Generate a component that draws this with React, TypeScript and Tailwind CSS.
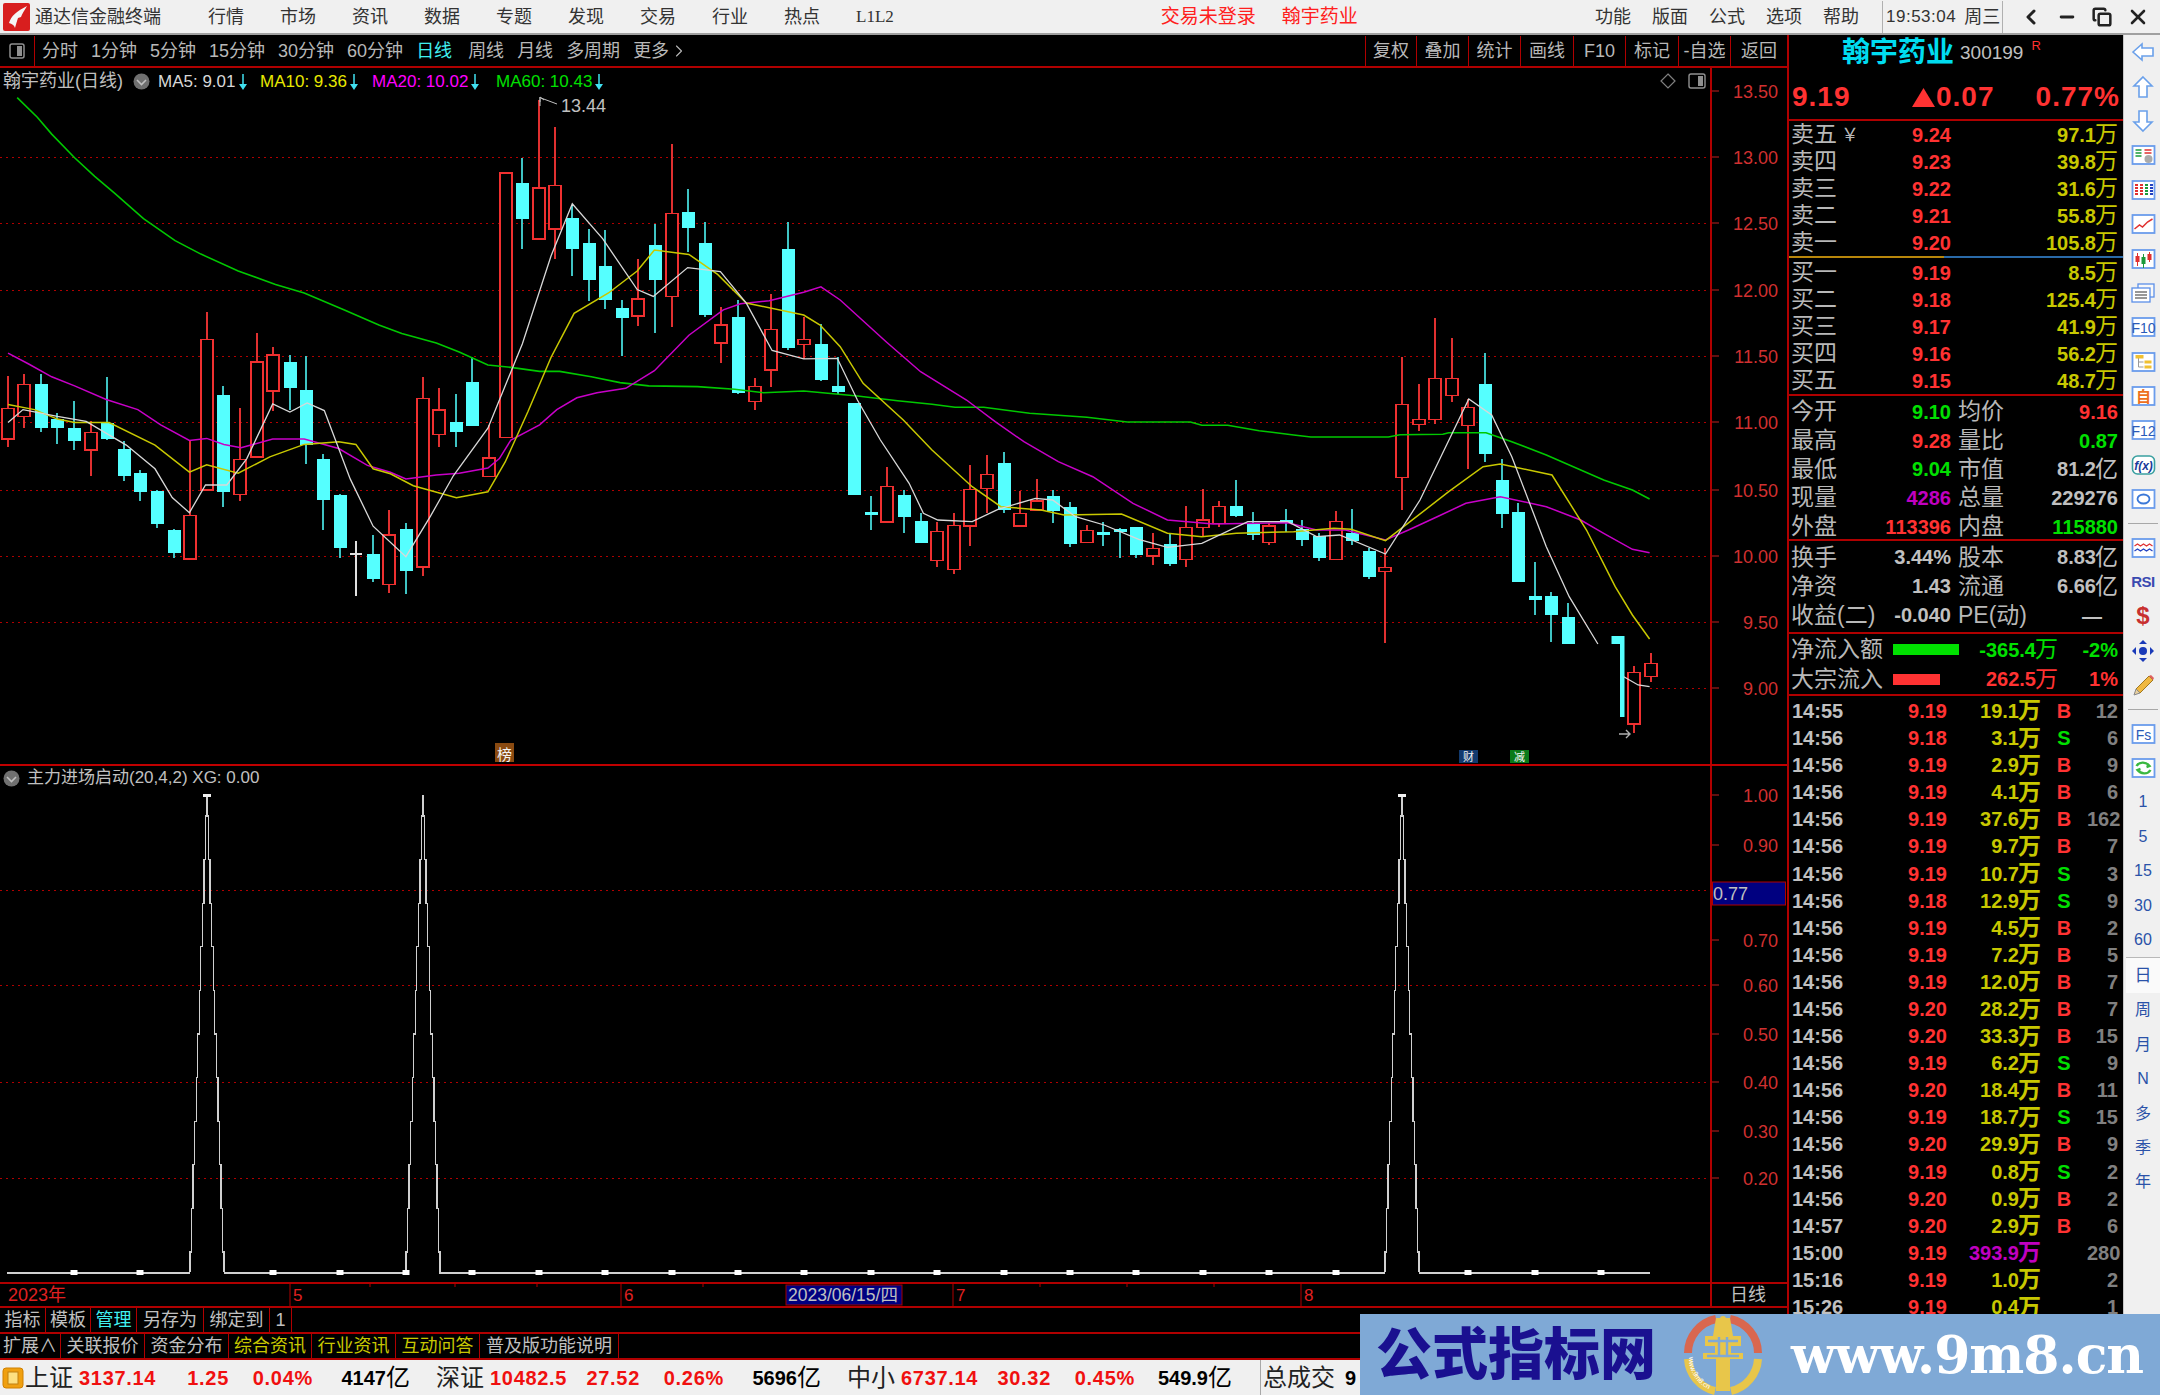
import { ChevronLeft, ChevronRight, Copy, Minus, X as Close } from "lucide-react";
import type { ReactNode } from "react";

const RED = "#ff3232";
const YEL = "#c8c800";
const GRN = "#00e000";
const PUR = "#c000c0";
const GRY = "#c0c0c0";

// candle x from its index
const cx = (i: number) => Math.round(7.5 + 16.6 * i);
const y7 = (v: number) => 80 + v / 2.958;
const y8 = (v: number) => 300 + v / 3;

type Candle = [string, number, number, number, number];

// wick top, body top, body bottom, wick bottom
const candlesA: Candle[] = [
  ["r", 875, 972, 1062, 1085], ["r", 870, 900, 995, 1028], ["c", 870, 900, 1028, 1040], ["c", 985, 1003, 1028, 1077],
  ["c", 950, 1030, 1068, 1095], ["r", 1010, 1043, 1094, 1170], ["c", 878, 1015, 1063, 1065], ["c", 1068, 1091, 1170, 1187],
  ["c", 1153, 1162, 1219, 1246], ["c", 1212, 1215, 1312, 1325], ["c", 1327, 1330, 1400, 1415], ["r", 1065, 1288, 1417, 1417],
  ["r", 687, 768, 1213, 1215], ["c", 905, 932, 1219, 1263], ["r", 970, 1122, 1226, 1246], ["r", 748, 834, 1115, 1115],
  ["r", 790, 813, 920, 980], ["c", 812, 834, 912, 975], ["c", 816, 918, 1080, 1135], ["c", 1105, 1122, 1241, 1330],
  ["c", 1225, 1229, 1383, 1415], ["w", 1365, 1403, 1405, 1525], ["c", 1345, 1402, 1477, 1485], ["r", 1272, 1346, 1493, 1517],
  ["c", 1310, 1327, 1453, 1520], ["r", 878, 942, 1440, 1467], ["r", 912, 976, 1048, 1085], ["c", 930, 1011, 1041, 1085],
  ["c", 818, 892, 1024, 1024], ["r", 1020, 1118, 1173, 1175], ["r", 275, 275, 1057, 1060], ["c", 230, 306, 410, 500],
  ["r", 60, 320, 471, 471], ["r", 140, 312, 441, 530], ["c", 370, 407, 499, 580], ["c", 440, 483, 593, 655],
  ["c", 443, 549, 651, 677], ["c", 650, 675, 704, 815], ["r", 530, 648, 698, 727], ["c", 425, 488, 593, 748],
  ["r", 190, 395, 640, 730], ["c", 322, 390, 437, 510], ["c", 420, 483, 695, 700], ["r", 672, 724, 778, 837],
  ["c", 650, 700, 925, 930], ["r", 882, 906, 951, 975], ["r", 633, 738, 858, 908], ["c", 420, 501, 793, 800],
  ["r", 700, 767, 783, 825], ["c", 722, 781, 887, 890], ["c", 820, 904, 922, 930], ["c", 954, 954, 1228, 1228],
  ["c", 1230, 1278, 1284, 1330], ["r", 1145, 1203, 1307, 1307],
];

const candlesB: Candle[] = [
  ["c", 570, 586, 652, 700], ["c", 640, 662, 729, 730], ["r", 665, 695, 782, 800], ["r", 640, 677, 808, 822],
  ["r", 495, 568, 678, 737], ["r", 465, 523, 565, 640], ["c", 455, 488, 630, 640], ["r", 572, 640, 678, 680],
  ["r", 537, 603, 630, 630], ["c", 570, 587, 632, 670], ["c", 605, 622, 733, 742], ["r", 675, 691, 728, 730],
  ["c", 665, 695, 702, 738], ["c", 685, 686, 688, 775], ["c", 680, 681, 765, 773], ["r", 698, 745, 768, 795],
  ["c", 700, 732, 793, 798], ["r", 618, 682, 778, 800], ["r", 568, 660, 682, 710], ["r", 604, 620, 670, 680],
  ["c", 540, 618, 647, 650], ["c", 635, 672, 706, 720], ["r", 668, 678, 727, 735], ["c", 627, 660, 670, 695],
  ["c", 660, 686, 720, 738], ["c", 700, 708, 773, 782], ["r", 632, 665, 778, 778], ["c", 627, 700, 723, 735],
  ["c", 745, 752, 832, 837], ["r", 745, 802, 814, 1030], ["r", 172, 313, 533, 630], ["r", 253, 358, 373, 392],
  ["r", 55, 236, 358, 372], ["r", 113, 236, 287, 305], ["r", 298, 322, 377, 508], ["c", 158, 253, 463, 487],
  ["c", 478, 541, 643, 685], ["c", 608, 636, 846, 846], ["c", 785, 888, 900, 945], ["c", 875, 888, 945, 1027],
  ["c", 910, 950, 1032, 1032],
];

type Pts = number[][];
const join = (a: Pts, b: Pts) =>
  [...a.map(([x, y]) => `${(x / 1.742).toFixed(1)},${y7(y).toFixed(1)}`), ...b.map(([x, y]) => `${(800 + x / 1.742).toFixed(1)},${y8(y).toFixed(1)}`)].join(" ");

const ma60 = join(
  [[30, 52], [65, 110], [90, 160], [130, 230], [165, 285], [200, 335], [250, 410], [305, 475], [350, 515], [415, 565], [480, 605], [530, 630], [600, 680], [660, 725], [700, 750], [760, 778], [800, 805], [850, 843], [890, 850], [940, 862], [975, 862], [1030, 878], [1080, 895], [1130, 905], [1215, 907], [1280, 915], [1330, 925], [1400, 920]],
  [[30, 277], [100, 288], [170, 302], [230, 313], [270, 322], [320, 322], [400, 340], [500, 352], [570, 366], [680, 366], [700, 376], [745, 376], [800, 392], [860, 405], [890, 411], [1025, 411], [1045, 404], [1120, 403], [1130, 398], [1195, 398], [1240, 425], [1300, 465], [1400, 540], [1450, 570], [1480, 597]],
);
const ma20 = join(
  [[14, 808], [50, 840], [90, 878], [130, 905], [185, 945], [240, 975], [280, 1020], [330, 1066], [360, 1060], [390, 1078], [420, 1088], [475, 1062], [530, 1062], [590, 1090], [640, 1140], [680, 1160], [707, 1180], [760, 1168], [800, 1163], [850, 1148], [870, 1120], [890, 1065], [940, 1020], [970, 975], [1005, 940], [1040, 925], [1090, 912], [1140, 860], [1200, 755], [1260, 680], [1290, 662], [1340, 653], [1400, 628], [1430, 612]],
  [[70, 0], [150, 125], [210, 215], [290, 300], [340, 365], [390, 425], [450, 485], [510, 530], [580, 610], [640, 660], [720, 672], [850, 668], [880, 682], [900, 690], [950, 690], [1020, 720], [1060, 690], [1110, 650], [1160, 610], [1220, 590], [1300, 620], [1360, 660], [1400, 700], [1450, 748], [1480, 758]],
);
const ma10 = join(
  [[14, 960], [60, 975], [100, 1003], [130, 1013], [190, 1013], [270, 1080], [330, 1160], [360, 1138], [415, 1163], [470, 1115], [530, 1078], [590, 1070], [620, 1078], [650, 1150], [680, 1165], [720, 1200], [795, 1236], [850, 1218], [880, 1130], [920, 980], [960, 820], [1000, 690], [1060, 630], [1110, 565], [1140, 503], [1200, 516], [1250, 575], [1300, 660], [1400, 695]],
  [[35, 75], [70, 140], [110, 250], [180, 360], [230, 450], [300, 560], [350, 620], [420, 630], [460, 645], [560, 642], [640, 700], [700, 710], [760, 700], [860, 695], [930, 685], [960, 688], [1020, 722], [1130, 575], [1190, 500], [1220, 492], [1310, 525], [1370, 690], [1420, 860], [1450, 945], [1480, 1017]],
);
const ma5a = join(
  [[14, 1013], [40, 975], [100, 995], [150, 1010], [220, 1080], [270, 1150], [300, 1235], [330, 1280], [358, 1198], [395, 1198], [430, 1120], [475, 958], [505, 982], [535, 955], [565, 978], [610, 1180], [650, 1320], [707, 1410], [750, 1290], [790, 1170], [850, 1030], [910, 780], [960, 520], [997, 366], [1050, 470], [1110, 620], [1138, 640], [1198, 555], [1255, 567], [1300, 660], [1345, 800], [1400, 825]],
  [[65, 175], [100, 300], [140, 420], [190, 550], [215, 640], [240, 660], [300, 665], [345, 628], [410, 595], [440, 600], [480, 650], [530, 675], [590, 718], [640, 742], [700, 730], [780, 665], [850, 665], [900, 710], [940, 705], [1020, 762], [1080, 600], [1165, 297], [1205, 345], [1240, 470], [1300, 740], [1340, 890], [1390, 1032]],
);
const ma5b = join([], [[1435, 1130], [1460, 1155], [1480, 1160]]);

function CandleMark({ x, c, y }: { x: number; c: Candle; y: (v: number) => number }) {
  const [kind, wt, bt, bb, wb] = c;
  const wick = kind === "r" ? "#e03030" : kind === "c" ? "#3fc4c4" : "#e0e0e0";
  return (
    <g shapeRendering="crispEdges">
      <line x1={x} x2={x} y1={y(wt)} y2={y(wb)} stroke={wick} strokeWidth={1.5} />
      {kind === "r" && <rect x={x - 6} y={y(bt)} width={12} height={y(bb) - y(bt)} fill="#000" stroke="#f03030" strokeWidth={1.5} />}
      {kind === "c" && <rect x={x - 6.5} y={y(bt)} width={13} height={Math.max(y(bb) - y(bt), 3)} fill="#55ffff" />}
      {kind === "w" && <line x1={x - 6} x2={x + 6} y1={y(bt)} y2={y(bt)} stroke="#e0e0e0" strokeWidth={2} />}
    </g>
  );
}

function Tag({ x, y, h, size, bg, text }: { x: number; y: number; h: number; size: number; bg: string; text: string }) {
  return (
    <g>
      <rect x={x} y={y} width={19} height={h} fill={bg} />
      <text x={x + 9.5} y={y + h - 2} textAnchor="middle" fontSize={size} fill="#f4f4f4">
        {text}
      </text>
    </g>
  );
}

const priceLabels = [
  ["13.50", 91], ["13.00", 157], ["12.50", 223], ["12.00", 290], ["11.50", 356],
  ["11.00", 422], ["10.50", 490], ["10.00", 556], ["9.50", 622], ["9.00", 688],
] as const;

function PriceChart() {
  return (
    <svg viewBox="0 68 1787 696" className="block h-[696px] w-[1787px]">
      {priceLabels.slice(1, 9).map(([, y]) => (
        <line key={y} x1={0} x2={1710} y1={y} y2={y} stroke="#b00000" strokeDasharray="2 4" shapeRendering="crispEdges" />
      ))}
      <line x1={1650} x2={1710} y1={688} y2={688} stroke="#b00000" strokeDasharray="2 4" shapeRendering="crispEdges" />

      {candlesA.map((c, i) => (
        <CandleMark key={i} x={cx(i)} c={c} y={y7} />
      ))}
      {candlesB.map((c, i) => (
        <CandleMark key={i} x={cx(i + 54)} c={c} y={y8} />
      ))}
      {/* last candles are partly wiped in the picture */}
      <rect x={cx(97) - 6.5} y={636} width={13} height={8} fill="#55ffff" />
      <rect x={cx(97) + 2} y={644} width={4.5} height={73} fill="#55ffff" />
      <CandleMark x={cx(98)} c={["r", 1098, 1118, 1272, 1300]} y={y8} />
      <CandleMark x={cx(99)} c={["r", 1058, 1091, 1129, 1147]} y={y8} />

      <polyline points={ma60} fill="none" stroke="#00c800" strokeWidth={1.6} />
      <polyline points={ma20} fill="none" stroke="#c800c8" strokeWidth={1.5} />
      <polyline points={ma10} fill="none" stroke="#c8c800" strokeWidth={1.5} />
      <polyline points={ma5a} fill="none" stroke="#d8d8d8" strokeWidth={1.3} />
      <polyline points={ma5b} fill="none" stroke="#d8d8d8" strokeWidth={1.3} />

      {/* high marker */}
      <path d="M540 106V97M540 97l4 3M540 97l-0 5M541 98l16 6" fill="none" stroke="#c0c0c0" strokeWidth={1} />
      <text x={561} y={112} fontSize={18} fill={GRY}>
        13.44
      </text>
      {/* low marker */}
      <path d="M1619 734h11M1626 730l4 4-4 4" fill="none" stroke="#b0b0b0" strokeWidth={1.4} />

      <Tag x={495} y={743} h={19} size={15} bg="#8a4a10" text="榜" />
      <Tag x={1459} y={750} h={13} size={11} bg="#123a6e" text="财" />
      <Tag x={1510} y={750} h={13} size={11} bg="#0a7a1a" text="减" />

      {/* top right buttons */}
      <path d="M1668 74l7 7-7 7-7-7z" fill="none" stroke="#808080" strokeWidth={1.2} />
      <rect x={1689} y={74} width={16} height={14} rx={2} fill="none" stroke="#909090" strokeWidth={1.4} />
      <rect x={1698} y={76} width={5} height={10} fill="#909090" />

      {/* axis */}
      <line x1={1711} x2={1711} y1={68} y2={764} stroke="#b00000" strokeWidth={2} />
      {priceLabels.map(([t, y]) => (
        <g key={t}>
          <line x1={1712} x2={1719} y1={y} y2={y} stroke="#c02020" />
          <text x={1778} y={y + 7} fontSize={18} textAnchor="end" fill="#d03030">
            {t}
          </text>
        </g>
      ))}
    </svg>
  );
}

function peakPath(c: number) {
  const halves = Array.from({ length: 11 }, (_, i) => 1.55 * (i + 1));
  const yTop = (n: number) => 816 + 43.6 * (n - 1);
  let left = `M${c - halves[10]} 1272`;
  let right = `M${c + halves[10]} 1272`;
  for (let n = 11; n >= 1; n--) {
    const h = n > 1 ? halves[n - 2] : 0;
    const yy = yTop(n);
    left += ` V${yy} H${c - h}`;
    right += ` V${yy} H${c + h}`;
  }
  return `${left} V795 M${right.slice(1)} V795`;
}

const lowerLabels = [
  ["1.00", 795], ["0.90", 845], ["0.70", 940], ["0.60", 985], ["0.50", 1034],
  ["0.40", 1082], ["0.30", 1131], ["0.20", 1178],
] as const;

function IndicatorChart() {
  const squares = Array.from({ length: 24 }, (_, k) => (k + 1) * 4);
  return (
    <svg viewBox="0 766 1787 516" className="block h-[516px] w-[1787px]">
      {[890, 985, 1082, 1178].map((y) => (
        <line key={y} x1={0} x2={1710} y1={y} y2={y} stroke="#b00000" strokeDasharray="2 4" shapeRendering="crispEdges" />
      ))}
      <g fill="none" stroke="#d0d0d0" strokeWidth={1.3} shapeRendering="crispEdges">
        <path d={peakPath(cx(12))} />
        <path d={peakPath(cx(25))} />
        <path d={peakPath(cx(84))} />
        <path d="M7 1273H190M224 1273H405M439 1273H1385M1419 1273H1650" />
      </g>
      {squares.map((k) =>
        k === 12 || k === 84 ? (
          <rect key={k} x={cx(k) - 4} y={794} width={8} height={3} fill="#f0f0f0" />
        ) : (
          <rect key={k} x={cx(k) - 3.5} y={1270} width={7} height={5} fill="#fff" />
        ),
      )}

      <line x1={1711} x2={1711} y1={766} y2={1282} stroke="#b00000" strokeWidth={2} />
      {lowerLabels.map(([t, y]) => (
        <g key={t}>
          <line x1={1712} x2={1719} y1={y} y2={y} stroke="#c02020" />
          <text x={1778} y={y + 7} fontSize={18} textAnchor="end" fill="#d03030">
            {t}
          </text>
        </g>
      ))}
      <rect x={1712.5} y={882} width={73} height={23} fill="#000080" stroke="#b00000" />
      <text x={1713} y={900} fontSize={18} fill={GRY}>
        0.77
      </text>
    </svg>
  );
}

function DateAxis() {
  return (
    <svg viewBox="0 1282 1787 24" className="block h-[24px] w-[1787px]">
      <line x1={0} x2={1787} y1={1283} y2={1283} stroke="#b00000" strokeWidth={2} />
      {[290, 621, 953, 1301].map((x) => (
        <line key={x} x1={x} x2={x} y1={1284} y2={1306} stroke="#b00000" />
      ))}
      {[370, 455, 537, 703, 1040, 1127, 1214].map((x) => (
        <line key={x} x1={x} x2={x} y1={1284} y2={1287} stroke="#b00000" />
      ))}
      <line x1={1711} x2={1711} y1={1284} y2={1306} stroke="#b00000" strokeWidth={2} />
      <text x={8} y={1301} fontSize={18} fill="#e02020">
        2023年
      </text>
      <text x={293} y={1301} fontSize={17} fill="#e02020">
        5
      </text>
      <text x={624} y={1301} fontSize={17} fill="#e02020">
        6
      </text>
      <text x={956} y={1301} fontSize={17} fill="#e02020">
        7
      </text>
      <text x={1304} y={1301} fontSize={17} fill="#e02020">
        8
      </text>
      <rect x={786} y={1285} width={116} height={20} fill="#000080" stroke="#a00000" />
      <text x={788} y={1301} fontSize={17.5} fill={GRY}>
        2023/06/15/四
      </text>
      <text x={1730} y={1301} fontSize={18} fill={GRY}>
        日线
      </text>
    </svg>
  );
}

function Arrow() {
  return (
    <svg width="10" height="18" viewBox="0 0 10 18" className="ml-[2px] shrink-0">
      <path d="M5 1v10" stroke="#40e0f0" strokeWidth={1.5} />
      <path d="M1 11h8l-4 6z" fill="#40e0f0" />
    </svg>
  );
}

function Chevron() {
  return (
    <svg width="17" height="17" viewBox="0 0 17 17" className="shrink-0">
      <circle cx="8.5" cy="8.5" r="8" fill="#707070" />
      <path d="M4 7l4.5 4.5L13 7" fill="none" stroke="#c0c0c0" strokeWidth={1.6} />
    </svg>
  );
}

function Btn({ children, cls }: { children: ReactNode; cls: string }) {
  return <div className={`flex h-full items-center justify-center border-r border-[#b00000] ${cls}`}>{children}</div>;
}

function TitleBar() {
  return (
    <header className="flex h-[35px] items-center border-b-2 border-[#a0a0a0] bg-[#f0f0f0] pt-[1px] text-[18px] text-[#333]">
      <svg width="27" height="28" viewBox="0 0 27 28" className="ml-[3px] shrink-0">
        <rect width="27" height="28" rx="2" fill="#d81e1e" />
        <path d="M6 20c2-7 8-12 18-17-3 5-5 8-6 11l-3 1c-1 3-2 6-3 10-1-3-3-4-6-5z" fill="#f5f5f5" />
      </svg>
      <span className="ml-[5px] w-[127px]">通达信金融终端</span>
      <nav className="ml-[46px] flex gap-[36px]">
        <span>行情</span>
        <span>市场</span>
        <span>资讯</span>
        <span>数据</span>
        <span>专题</span>
        <span>发现</span>
        <span>交易</span>
        <span>行业</span>
        <span>热点</span>
        <span className="font-['Liberation_Serif',serif] text-[17px]">L1L2</span>
      </nav>
      <span className="ml-[267px] text-[19px] text-[#ff2020]">交易未登录</span>
      <span className="ml-[26px] text-[19px] text-[#ff2020]">翰宇药业</span>
      <div className="ml-auto flex gap-[21px]">
        <span>功能</span>
        <span>版面</span>
        <span>公式</span>
        <span>选项</span>
        <span>帮助</span>
      </div>
      <div className="ml-[23px] flex h-full w-[121px] items-center gap-[8px] border-x border-[#b0b0b0] pl-[3px]">
        <span className="text-[17px] tracking-[0.5px]">19:53:04</span>
        <span>周三</span>
      </div>
      <div className="flex w-[157px] items-center justify-around pr-[3px] pl-[9px] text-[#222]">
        <ChevronLeft size={24} strokeWidth={3} />
        <Minus size={20} strokeWidth={3.5} />
        <Copy size={20} strokeWidth={3} />
        <Close size={24} strokeWidth={2.6} />
      </div>
    </header>
  );
}

function Toolbar() {
  return (
    <div className="flex h-[33px] items-center border-b-2 border-[#b00000] pt-[1px] text-[18px] text-[#b8b8b8]">
      <div className="flex h-full w-[35px] items-center justify-center border-r border-[#b00000]">
        <svg width="16" height="16" viewBox="0 0 16 16">
          <rect x="1" y="1" width="14" height="14" rx="2" fill="none" stroke="#909090" strokeWidth={1.5} />
          <rect x="8" y="3" width="5" height="10" fill="#909090" />
        </svg>
      </div>
      <div className="ml-[7px] flex items-center gap-[13px]">
        <span>分时</span>
        <span>1分钟</span>
        <span>5分钟</span>
        <span>15分钟</span>
        <span>30分钟</span>
        <span>60分钟</span>
        <span className="text-[#40f0f0]">日线</span>
        <span className="ml-[3px]">周线</span>
        <span>月线</span>
        <span>多周期</span>
        <span className="flex items-center">
          更多
          <ChevronRight size={20} strokeWidth={1.3} />
        </span>
      </div>
      <div className="ml-auto flex h-full items-center border-l border-[#b00000]">
        <Btn cls="w-[51px]">复权</Btn>
        <Btn cls="w-[52px]">叠加</Btn>
        <Btn cls="w-[52px]">统计</Btn>
        <Btn cls="w-[53px]">画线</Btn>
        <Btn cls="w-[52px]">F10</Btn>
        <Btn cls="w-[53px]">标记</Btn>
        <Btn cls="w-[52px]">-自选</Btn>
        <div className="flex h-full w-[56px] items-center justify-center">返回</div>
      </div>
    </div>
  );
}

function MainColumn() {
  return (
    <div className="flex h-full w-[1787px] shrink-0 flex-col">
      <Toolbar />
      <div className="relative h-[696px]">
        <PriceChart />
        <div className="absolute top-[3px] left-[3px] flex h-[21px] items-center text-[17px] text-[#c0c0c0]">
          <span className="w-[130px] text-[18px]">翰宇药业(日线)</span>
          <Chevron />
          <span className="ml-[8px] flex w-[102px] items-center text-[#d8d8d8]">
            MA5: 9.01
            <Arrow />
          </span>
          <span className="flex w-[112px] items-center text-[#e8e800]">
            MA10: 9.36
            <Arrow />
          </span>
          <span className="flex w-[124px] items-center text-[#ff00ff]">
            MA20: 10.02
            <Arrow />
          </span>
          <span className="flex w-[120px] items-center text-[#00e000]">
            MA60: 10.43
            <Arrow />
          </span>
        </div>
      </div>
      <div className="h-[2px] bg-[#c00000]" />
      <div className="relative h-[516px]">
        <IndicatorChart />
        <div className="absolute top-[2px] left-[3px] flex h-[20px] items-center gap-[7px] text-[17px] text-[#c0c0c0]">
          <Chevron />
          <span>主力进场启动(20,4,2) XG: 0.00</span>
        </div>
      </div>
      <DateAxis />
      <div className="flex h-[26px] items-center border-t-2 border-[#b00000] text-[18px] text-[#c0c0c0]">
        <Btn cls="w-[46px]">指标</Btn>
        <Btn cls="w-[45px]">模板</Btn>
        <Btn cls="w-[46px] text-[#40f0f0]">管理</Btn>
        <Btn cls="w-[67px]">另存为</Btn>
        <Btn cls="w-[66px]">绑定到</Btn>
        <Btn cls="w-[22px]">1</Btn>
      </div>
      <div className="flex h-[26px] items-center border-t-2 border-[#b00000] text-[18px] text-[#c0c0c0]">
        <Btn cls="w-[61px]">扩展∧</Btn>
        <Btn cls="w-[84px]">关联报价</Btn>
        <Btn cls="w-[84px]">资金分布</Btn>
        <Btn cls="w-[83px] text-[#c8c800]">综合资讯</Btn>
        <Btn cls="w-[84px] text-[#c8c800]">行业资讯</Btn>
        <Btn cls="w-[84px] text-[#c8c800]">互动问答</Btn>
        <Btn cls="w-[139px]">普及版功能说明</Btn>
      </div>
    </div>
  );
}

function Wan({ v, color, unit = "万" }: { v: string; color: string; unit?: string }) {
  return (
    <span className="flex items-center" style={{ color }}>
      <b className="text-[20px]">{v}</b>
      <span className="-ml-px text-[23px] leading-none">{unit}</span>
    </span>
  );
}

const book = [
  ["卖五", "9.24", "97.1"], ["卖四", "9.23", "39.8"], ["卖三", "9.22", "31.6"], ["卖二", "9.21", "55.8"], ["卖一", "9.20", "105.8"],
];
const bids = [
  ["买一", "9.19", "8.5"], ["买二", "9.18", "125.4"], ["买三", "9.17", "41.9"], ["买四", "9.16", "56.2"], ["买五", "9.15", "48.7"],
];

function BookRow({ row, extra }: { row: string[]; extra?: string }) {
  return (
    <div className="flex h-[27px] items-center pr-[5px]">
      <div className="relative flex w-[160px] shrink-0 items-center justify-between">
        <span className="flex w-[100px] items-center gap-[4px] text-[#b8b8b8]">
          {row[0]}
          {extra && <span className="text-[18px]">{extra}</span>}
        </span>
        <b className="text-[20px] text-[#ff3232]">{row[1]}</b>
      </div>
      <div className="ml-auto">
        <Wan v={row[2]} color={YEL} />
      </div>
    </div>
  );
}

type Stat = [string, string, string, string, string, string?];
const stats: Stat[] = [
  ["今开", "9.10", GRN, "均价", "9.16", RED],
  ["最高", "9.28", RED, "量比", "0.87", GRN],
  ["最低", "9.04", GRN, "市值", "81.2亿", GRY],
  ["现量", "4286", PUR, "总量", "229276", GRY],
  ["外盘", "113396", RED, "内盘", "115880", GRN],
];
const funds: Stat[] = [
  ["换手", "3.44%", GRY, "股本", "8.83亿", GRY],
  ["净资", "1.43", GRY, "流通", "6.66亿", GRY],
  ["收益(二)", "-0.040", GRY, "PE(动)", "—", GRY],
];

function Value({ v, color }: { v: string; color: string }) {
  if (v.endsWith("亿")) return <Wan v={v.slice(0, -1)} color={color} unit="亿" />;
  return (
    <b className="text-[20px]" style={{ color }}>
      {v}
    </b>
  );
}

function StatRow({ s, tall }: { s: Stat; tall?: boolean }) {
  return (
    <div className={`flex items-center pt-[3px] pr-[5px] ${tall ? "h-[29px]" : "h-[28.7px]"}`}>
      <div className="flex w-[160px] shrink-0 items-center justify-between">
        <span className="whitespace-nowrap text-[#b8b8b8]">{s[0]}</span>
        <Value v={s[1]} color={s[2]} />
      </div>
      <span className="ml-[7px] whitespace-nowrap text-[#b8b8b8]">{s[3]}</span>
      <div className={`ml-auto ${s[3] === "PE(动)" ? "pr-[16px]" : ""}`}>
        <Value v={s[4]} color={s[5] ?? GRY} />
      </div>
    </div>
  );
}

const ticks: [string, string, string, string, string][] = [
  ["14:55", "9.19", "19.1", "B", "12"], ["14:56", "9.18", "3.1", "S", "6"], ["14:56", "9.19", "2.9", "B", "9"],
  ["14:56", "9.19", "4.1", "B", "6"], ["14:56", "9.19", "37.6", "B", "162"], ["14:56", "9.19", "9.7", "B", "7"],
  ["14:56", "9.19", "10.7", "S", "3"], ["14:56", "9.18", "12.9", "S", "9"], ["14:56", "9.19", "4.5", "B", "2"],
  ["14:56", "9.19", "7.2", "B", "5"], ["14:56", "9.19", "12.0", "B", "7"], ["14:56", "9.20", "28.2", "B", "7"],
  ["14:56", "9.20", "33.3", "B", "15"], ["14:56", "9.19", "6.2", "S", "9"], ["14:56", "9.20", "18.4", "B", "11"],
  ["14:56", "9.19", "18.7", "S", "15"], ["14:56", "9.20", "29.9", "B", "9"], ["14:56", "9.19", "0.8", "S", "2"],
  ["14:56", "9.20", "0.9", "B", "2"], ["14:57", "9.20", "2.9", "B", "6"], ["15:00", "9.19", "393.9", "", "280"],
  ["15:16", "9.19", "1.0", "", "2"], ["15:26", "9.19", "0.4", "", "1"],
];

function QuotePanel() {
  return (
    <div className="flex h-full w-[336px] shrink-0 flex-col overflow-hidden border-l-2 border-[#b00000] text-[23px] leading-none">
      <div className="flex h-[35px] items-center gap-[6px] pl-[53px]">
        <b className="text-[28px] text-[#00dcf0]">翰宇药业</b>
        <span className="text-[19px] text-[#c0c0c0]">300199</span>
        <span className="-mt-[14px] ml-[2px] text-[13px] text-[#ff3030]">R</span>
      </div>
      <div className="flex h-[49px] items-center pt-[5px] pr-[3px] pl-[3px] text-[28px] font-bold tracking-[1px] text-[#ff3232]">
        <span className="w-[120px]">9.19</span>
        <span className="flex w-[84px] items-center">
          <svg width="23" height="19" viewBox="0 0 23 19" className="mr-[1px] shrink-0">
            <path d="M11.5 0L23 19H0z" fill="#ff3232" />
          </svg>
          0.07
        </span>
        <span className="ml-auto">0.77%</span>
      </div>
      <div className="border-t-2 border-[#b00000] pl-[2px]">
        {book.map((r, i) => (
          <BookRow key={r[0]} row={r} extra={i === 0 ? "￥" : undefined} />
        ))}
      </div>
      <div className="flex h-[2px]">
        <div className="w-[155px] bg-[#b8860b]" />
        <div className="flex-1 bg-[#2a6aa8]" />
      </div>
      <div className="pt-[1px] pl-[2px]">
        {bids.map((r) => (
          <BookRow key={r[0]} row={r} />
        ))}
      </div>
      <div className="border-t-2 border-[#b00000] pl-[2px]">
        {stats.map((s) => (
          <StatRow key={s[0]} s={s} />
        ))}
      </div>
      <div className="border-t-2 border-[#b00000] pb-[4px] pl-[2px]">
        {funds.map((s) => (
          <StatRow key={s[0]} s={s} tall />
        ))}
      </div>
      <div className="border-t-2 border-[#b00000] pr-[5px] pl-[2px]">
        <div className="flex h-[30px] items-center pt-[1px]">
          <span className="w-[102px] shrink-0 whitespace-nowrap text-[#b8b8b8]">净流入额</span>
          <div className="h-[11px] w-[66px] shrink-0 bg-[#00e000]" />
          <div className="flex w-[99px] shrink-0 justify-end">
            <Wan v="-365.4" color={GRN} />
          </div>
          <b className="ml-auto text-[20px] text-[#00e000]">-2%</b>
        </div>
        <div className="flex h-[30px] items-center">
          <span className="w-[102px] shrink-0 whitespace-nowrap text-[#b8b8b8]">大宗流入</span>
          <div className="h-[11px] w-[47px] shrink-0 bg-[#ff3232]" />
          <div className="ml-[19px] flex w-[99px] shrink-0 justify-end">
            <Wan v="262.5" color={RED} />
          </div>
          <b className="ml-auto text-[20px] text-[#ff3232]">1%</b>
        </div>
      </div>
      <div className="flex-1 border-t-2 border-[#b00000] pt-px text-[20px] font-bold">
        {ticks.map((t, i) => (
          <div key={i} className="flex h-[27.1px] items-center pr-[5px] pl-[3px]">
            <span className="w-[100px] shrink-0 text-[#c0c0c0]">{t[0]}</span>
            <span className="w-[55px] shrink-0 text-right text-[#ff3232]">{t[1]}</span>
            <div className="flex w-[94px] shrink-0 justify-end">
              <Wan v={t[2]} color={t[2] === "393.9" ? PUR : YEL} />
            </div>
            <span className={`w-[46px] shrink-0 text-center ${t[3] === "B" ? "text-[#ff3232]" : "text-[#00e000]"}`}>{t[3]}</span>
            <span className="flex-1 text-right whitespace-nowrap text-[#808080]">{t[4]}</span>
          </div>
        ))}
      </div>
    </div>
  );
}

function IconBox({ children }: { children: ReactNode }) {
  return (
    <svg width="25" height="22" viewBox="0 0 24 22">
      <rect x="1" y="2" width="22" height="18" fill="#fff" stroke="#6a9cec" strokeWidth={1.8} />
      {children}
    </svg>
  );
}

function Cell({ children }: { children: ReactNode }) {
  return <div className="flex h-[34.4px] items-center justify-center text-[16px] text-[#2a52a8]">{children}</div>;
}

function Sep() {
  return (
    <div className="flex h-[14px] items-center px-[2px]">
      <div className="h-px w-full bg-[#a8a8a8]" />
    </div>
  );
}

const arrowStyle = { fill: "#fff", stroke: "#6aa0ea", strokeWidth: 1.6 };

function SideBar() {
  return (
    <aside className="flex h-full flex-1 flex-col border-l border-[#c8c8c8] bg-[#f0f0f0] pl-[2px]">
      <Cell>
        <svg width="24" height="20" viewBox="0 0 24 20">
          <path d="M2 10l9-8v4h11v8H11v4z" {...arrowStyle} />
        </svg>
      </Cell>
      <Cell>
        <svg width="22" height="24" viewBox="0 0 22 24">
          <path d="M11 2l9 9h-5v11H7V11H2z" {...arrowStyle} />
        </svg>
      </Cell>
      <Cell>
        <svg width="22" height="24" viewBox="0 0 22 24">
          <path d="M11 22l9-9h-5V2H7v11H2z" {...arrowStyle} />
        </svg>
      </Cell>
      <Cell>
        <IconBox>
          <path d="M4 6h6M4 9h6M4 12h6" stroke="#1a9a3a" strokeWidth={1.6} />
          <path d="M13 6h7M13 9h7" stroke="#e03030" strokeWidth={1.6} />
          <circle cx="17" cy="15" r="4" fill="#aaa" />
        </IconBox>
      </Cell>
      <Cell>
        <IconBox>
          <path d="M5 5v12" stroke="#e03030" strokeWidth={3} strokeDasharray="2 1" />
          <path d="M10 5v12" stroke="#e03030" strokeWidth={3} strokeDasharray="2 1" />
          <path d="M15 5v12" stroke="#1a9a3a" strokeWidth={3} strokeDasharray="2 1" />
          <path d="M20 5v12" stroke="#2040c0" strokeWidth={3} strokeDasharray="2 1" />
        </IconBox>
      </Cell>
      <Cell>
        <IconBox>
          <path d="M3 16l5-4 3 2 5-5 5-3" fill="none" stroke="#e03030" strokeWidth={1.5} />
        </IconBox>
      </Cell>
      <Cell>
        <IconBox>
          <path d="M6 5v13M18 4v10" stroke="#e03030" />
          <rect x="4" y="8" width="4" height="6" fill="#e03030" />
          <rect x="16" y="6" width="4" height="6" fill="#e03030" />
          <path d="M12 6v14" stroke="#1a9a3a" />
          <rect x="10" y="9" width="4" height="7" fill="#1a9a3a" />
        </IconBox>
      </Cell>
      <Cell>
        <svg width="24" height="20" viewBox="0 0 24 20">
          <rect x="7" y="1" width="16" height="13" fill="#f8f8f8" stroke="#5b8fe8" strokeWidth={1.3} />
          <rect x="1" y="5" width="18" height="14" fill="#fff" stroke="#5b8fe8" strokeWidth={1.3} />
          <path d="M4 9h12M4 12h12M4 15h12" stroke="#777" strokeWidth={1.5} />
        </svg>
      </Cell>
      <Cell>
        <IconBox>
          <text x="12" y="16.5" textAnchor="middle" fontSize="14" fontWeight="500" fill="#2a5ab8">
            F10
          </text>
        </IconBox>
      </Cell>
      <Cell>
        <IconBox>
          <path d="M7 7v9h5M7 11h5" fill="none" stroke="#999" />
          <rect x="4" y="4" width="8" height="3.5" fill="#f0c030" />
          <rect x="13" y="9.5" width="7" height="3" fill="#f0c030" />
          <rect x="13" y="14.5" width="7" height="3" fill="#f0c030" />
        </IconBox>
      </Cell>
      <Cell>
        <IconBox>
          <text x="12" y="17" textAnchor="middle" fontSize="15" fontWeight="700" fill="#ee7020">
            自
          </text>
        </IconBox>
      </Cell>
      <Cell>
        <IconBox>
          <text x="12" y="16.5" textAnchor="middle" fontSize="14" fontWeight="500" fill="#2a5ab8">
            F12
          </text>
        </IconBox>
      </Cell>
      <Cell>
        <svg width="25" height="22" viewBox="0 0 24 22">
          <rect x="1" y="2" width="22" height="18" rx="5" fill="#fff" stroke="#3aa0a0" strokeWidth={1.6} />
          <text x="12" y="16" textAnchor="middle" fontSize="12" fontStyle="italic" fontWeight="700" fill="#1a3a9a">
            f(x)
          </text>
        </svg>
      </Cell>
      <Cell>
        <IconBox>
          <ellipse cx="12" cy="11" rx="6" ry="4.5" fill="none" stroke="#3a78d8" strokeWidth={1.8} />
        </IconBox>
      </Cell>
      <Sep />
      <Cell>
        <IconBox>
          <path d="M3 9l3-2 3 2 3-2 3 2 3-2 3 2" fill="none" stroke="#e03030" strokeWidth={1.2} />
          <path d="M3 14l3-2 3 2 3-2 3 2 3-2 3 2" fill="none" stroke="#2040c0" strokeWidth={1.2} />
        </IconBox>
      </Cell>
      <Cell>
        <span className="text-[15px] font-bold tracking-[-0.5px] text-[#3a4ab0]">RSI</span>
      </Cell>
      <Cell>
        <span className="text-[24px] font-bold text-[#c83030]">$</span>
      </Cell>
      <Cell>
        <svg width="24" height="24" viewBox="0 0 24 24" fill="#1a3ab8">
          <path d="M12 1l4 4h-8zM12 23l4-4H8zM1 12l4-4v8zM23 12l-4-4v8z" />
          <circle cx="12" cy="12" r="4" />
        </svg>
      </Cell>
      <Cell>
        <svg width="24" height="24" viewBox="0 0 24 24">
          <path d="M5 16L18 3l4 4L9 20z" fill="#f0b840" stroke="#a07820" />
          <path d="M5 16l4 4-6 2z" fill="#e8d0a0" stroke="#888" />
          <path d="M18 3l4 4 1-2-3-3z" fill="#e06060" />
        </svg>
      </Cell>
      <Sep />
      <Cell>
        <IconBox>
          <text x="12" y="16.5" textAnchor="middle" fontSize="14" fontWeight="500" fill="#2a5ab8">
            Fs
          </text>
        </IconBox>
      </Cell>
      <Cell>
        <IconBox>
          <path d="M5 9c3-5 10-4 13 0l-3 1M19 13c-3 5-10 4-13 0l3-1" fill="none" stroke="#3ab840" strokeWidth={2.4} />
        </IconBox>
      </Cell>
      <Cell>1</Cell>
      <Cell>5</Cell>
      <Cell>15</Cell>
      <Cell>30</Cell>
      <Cell>60</Cell>
      <div className="flex h-[36px] items-center justify-center border-t border-[#b8b8b8] bg-[#fafafa] text-[17px] text-[#2a52a8]">日</div>
      <Cell>周</Cell>
      <Cell>月</Cell>
      <Cell>N</Cell>
      <Cell>多</Cell>
      <Cell>季</Cell>
      <Cell>年</Cell>
    </aside>
  );
}

function Index({ name, val, chg, pct, amt }: { name: string; val: string; chg: string; pct: string; amt: string }) {
  return (
    <div className="flex items-center">
      <span className="w-[54px] text-[24px] text-[#222]">{name}</span>
      <b className="w-[77px] text-[20px] tracking-[0.7px] text-[#f01010]">{val}</b>
      <b className="w-[73px] text-right text-[20px] tracking-[0.7px] text-[#f01010]">{chg}</b>
      <b className="w-[84px] text-right text-[20px] tracking-[0.7px] text-[#f01010]">{pct}</b>
      <span className="flex w-[97px] items-center justify-end text-black">
        <b className="text-[20px]">{amt}</b>
        <span className="text-[24px]">亿</span>
      </span>
    </div>
  );
}

function StatusBar() {
  return (
    <footer className="flex h-[37px] items-center border-t-2 border-[#b00000] bg-[#f0f0f0] leading-none">
      <svg width="22" height="22" viewBox="0 0 22 22" className="mr-[1px] ml-[2px] shrink-0">
        <rect x="1" y="1" width="20" height="20" rx="3" fill="#f0a010" stroke="#d08000" />
        <rect x="6" y="5" width="10" height="12" fill="#fde080" stroke="#c08010" />
      </svg>
      <div className="flex gap-[26px]">
        <Index name="上证" val="3137.14" chg="1.25" pct="0.04%" amt="4147" />
        <Index name="深证" val="10482.5" chg="27.52" pct="0.26%" amt="5696" />
        <Index name="中小" val="6737.14" chg="30.32" pct="0.45%" amt="549.9" />
      </div>
      <div className="ml-[28px] flex h-full items-center gap-[10px] border-l border-[#a8a8a8] pl-[2px] whitespace-nowrap">
        <span className="text-[24px] text-[#222]">总成交</span>
        <b className="text-[20px] text-black">9</b>
      </div>
    </footer>
  );
}

function Watermark() {
  return (
    <div className="absolute top-[1314px] left-[1360px] flex h-[81px] w-[800px] items-center bg-[#7fa9d6]">
      <span className="ml-[16px] w-[280px] text-[56px] leading-none font-black whitespace-nowrap text-[#1a1090]">公式指标网</span>
      <svg width="80" height="80" viewBox="0 0 80 80" className="ml-[27px] shrink-0">
        <defs>
          <path id="wm-arc" d="M6 42a34 34 0 0 0 30 35" />
        </defs>
        <path d="M5 38a35 35 0 0 1 28-34" fill="none" stroke="#d9674f" strokeWidth={8} />
        <path d="M47 4a35 35 0 0 1 28 34" fill="none" stroke="#d9674f" strokeWidth={8} />
        <path d="M5 44a35 35 0 0 0 27 32" fill="none" stroke="#e8c64a" strokeWidth={8} />
        <path d="M75 44a35 35 0 0 1-27 32" fill="none" stroke="#e8c64a" strokeWidth={8} />
        <circle cx="40" cy="4" r="3" fill="#e8c64a" />
        <path d="M33 3h14l3 18h8v10H48v7h12v6H47v32H33V44H20v-6h12v-7H22V21h8z" fill="#e8c64a" />
        <path d="M25 26h30M24 41h32M36 22v18M44 22v18" stroke="#7fa9d6" strokeWidth={2.4} />
        <text fontSize="7" fill="#fff">
          <textPath href="#wm-arc">www.9m8.cn</textPath>
        </text>
      </svg>
      <span className="ml-[28px] font-['DejaVu_Serif',serif] text-[52px] leading-none font-black tracking-[-1px] whitespace-nowrap text-white">www.9m8.cn</span>
    </div>
  );
}

export default function App() {
  return (
    <div className="relative flex h-[1395px] w-[2160px] flex-col overflow-hidden bg-black font-['Liberation_Sans','Noto_Sans_CJK_SC',sans-serif]">
      <TitleBar />
      <div className="flex h-[1323px]">
        <MainColumn />
        <QuotePanel />
        <SideBar />
      </div>
      <StatusBar />
      <Watermark />
    </div>
  );
}
